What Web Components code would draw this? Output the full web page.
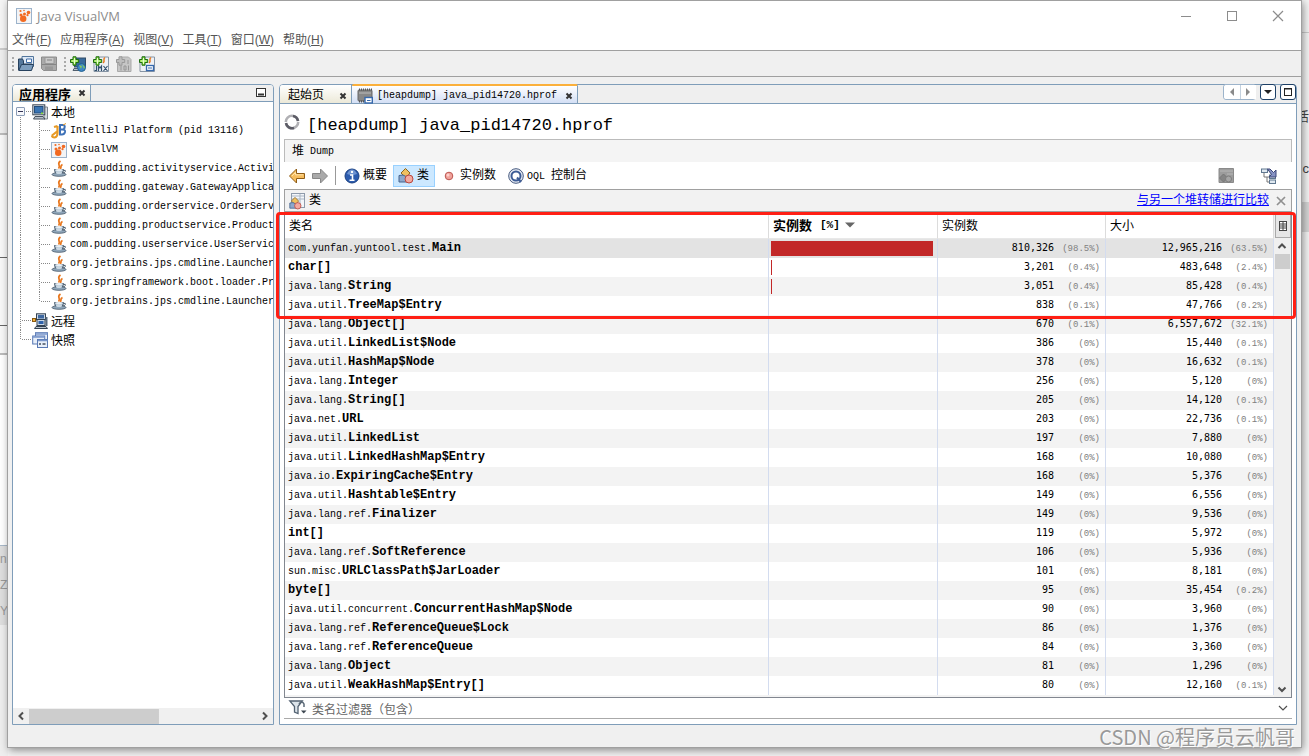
<!DOCTYPE html>
<html lang="zh-CN">
<head>
<meta charset="utf-8">
<title>Java VisualVM</title>
<style>
html { height: 100%; }
body {
  margin: 0; min-height: 100%; box-sizing: border-box; padding: 0 7px 8px 8px;
  display: flex; position: relative; overflow: hidden; color: #000; background: #f2f2f2;
  font: 12px/19px "Liberation Sans", "Noto Sans CJK SC", sans-serif;
  --mono: "Liberation Mono", "Noto Sans CJK SC", monospace;
  --digits: "DejaVu Sans Mono", monospace;
  --ui: "Open Sans", "Noto Sans CJK SC", sans-serif;
  --edge: #7f9db9;
}
app-window { flex: 1; min-width: 0; }
</style>
</head>
<body>
<desk-backdrop></desk-backdrop>
<app-window></app-window>
<script>
const CUP = '<path d="M9.5 0C5 3 10.500 4.500 7.500 7.500M11.500 3.500C8.500 5 11 6 9.300 8" fill="none" stroke="#e8761c" stroke-width="1.700"/><path d="M3.500 8.500h9l-.8 3.500q-.7 1.500-2.200 1.500h-3q-1.700 0-2.200-1.500z" fill="#a9bdcd" stroke="#46586a"/><path d="M12.500 9.500q2.500-.8 1.800 1t-2.800 1.500" fill="none" stroke="#46586a"/><ellipse cx="8" cy="13.500" rx="7" ry="1.800" fill="#8fa6ba" stroke="#46586a" stroke-width=".8"/><ellipse cx="8" cy="11.500" rx="3" ry="1.500" fill="#c9d7e2"/><ellipse cx="8" cy="9" rx="3.800" ry="1" fill="#e6eef4"/>';
const PLUS = '<path d="M3 .8h3v2.700h2.700v3H6v2.700H3V6.500H.5v-3H3z" fill="#8bdd3c" stroke="#1d6b12"/><path d="M4.500 2v6M1.700 5h5.600" stroke="#e9ffd2"/>';
const BOXES = '<path d="M3 5l4.500-4.500L12 5l-4 5z" fill="#f0c060" stroke="#8a6420"/><path d="M1 7.500L5 7l4 2v5H1z" fill="#8da8cc" stroke="#46648e"/><circle cx="11" cy="11" r="4" fill="#f3a9a0" stroke="#b9483f"/>';
const VVM = '<rect x=".5" y=".5" width="15" height="15" fill="#f3f4f6" stroke="#9cb3cb"/><g fill="#f26a21"><ellipse cx="7.200" cy="10.700" rx="3.200" ry="3.200"/><circle cx="5" cy="7" r="1.500"/><circle cx="8.500" cy="6" r="1.500"/><circle cx="12.500" cy="4.500" r="1.800"/><circle cx="4.500" cy="3" r="1.100"/><circle cx="11.500" cy="7.200" r="1.100"/><circle cx="8" cy="2.500" r=".8"/></g>';
const ICONS = {
  visualvm: VVM, java: CUP,
  open: '<path d="M4 .5h11.500v10H4z" fill="#dfe9f5" stroke="#53769c"/><path d="M8.500 3h5v3.500h-5z" fill="#fff" stroke="#3f6da8"/><path d="M.5 3h4l1 2v3h8.500l-1 6H.5z" fill="#54779b" stroke="#28425e"/><path d="M.8 14.500L3.500 8.500h12L13.500 14.500z" fill="#7d9dbd" stroke="#28425e"/>',
  save: '<path d="M.5 1h15v13.500H2.500l-2-2z" fill="#aaa" stroke="#8c8c8c"/><path d="M4 1.500h9v6H4z" fill="#c9c9c9" stroke="#999"/><path d="M4 10.500h8v4H4z" fill="#999"/><path d="M1 8.500h14M6 4h5" stroke="#858585"/>',
  addhost: '<rect x="4.500" y="2" width="11" height="9" fill="#396b9d" stroke="#334c66"/><path d="M4 12.500h5v2H3z" fill="#b4c1cf" stroke="#52606e"/><circle cx="11.500" cy="11.500" r="4" fill="#3c87c8" stroke="#24618f"/><path d="M9 9l3 1-1 3zM12 8l3 3-1 2z" fill="#87c95e"/>' + PLUS,
  addjmx: '<path d="M4.500 1h11v14.500H1v-9z" fill="#eef1f5" stroke="#8795a5"/><path d="M12 1.500c-3 2 1 3-2 5.500" fill="none" stroke="#e8761c" stroke-width="1.500"/><path d="M3.500 10v4.500H1.500M5.500 15v-5l1.500 2 1.500-2v5M10.500 10l4 5M14.500 10l-4 5" fill="none" stroke="#31506f" stroke-width="1.200"/>' + PLUS,
  addcore: '<path d="M4.500 1h8l2.500 2.500v12H1.500v-9z" fill="#c6c6c6" stroke="#aaa"/><path d="M5 9.500v5M8 10h2v4H8zM12.500 9.500v5M12 4v4" fill="none" stroke="#969696"/><path d="M3 .8h3v2.700h2.700v3H6v2.700H3V6.500H.5v-3H3z" fill="#bdbdbd" stroke="#999"/>',
  addsnap: '<path d="M4.500 1h11v14.500H1v-9z" fill="#eef1f5" stroke="#8795a5"/><path d="M12 1.500c-3 2 1 3-2 5.500" fill="none" stroke="#e8761c" stroke-width="1.500"/><rect x="7.500" y="9.500" width="7" height="5" fill="#fff" stroke="#3769ad" stroke-width="1.300"/><path d="M9 12h4" stroke="#3769ad"/>' + PLUS,
  host: '<path d="M12 3h3.500v12H12z" fill="#d6dbe0" stroke="#7d858d"/><rect x=".8" y=".8" width="12" height="10" fill="#d8e0e8" stroke="#3a4653"/><rect x="2.500" y="2.500" width="8.500" height="6.500" fill="#3975b4" stroke="#244d7a"/><path d="M3 12.500h8l2 2.500H1.500z" fill="#b8c2cb" stroke="#46515c"/><path d="M9 8.500h2V10H9z" fill="#8be03c"/>',
  remote: '<path d="M0 7h4" stroke="#444"/><rect x=".5" y="5.500" width="3" height="3" fill="#f5b13c" stroke="#8a5a10"/><rect x="4.500" y=".8" width="9" height="6" fill="#cdd9e6" stroke="#334252"/><rect x="6" y="2" width="6" height="3.500" fill="#3e68a0"/><rect x="5" y="6.500" width="8" height="6" fill="#cdd9e6" stroke="#334252"/><rect x="6.500" y="8" width="5" height="3" fill="#2f62aa"/><path d="M4 13.500h10l1.500 2h-13z" fill="#b8c2cb" stroke="#334252"/><path d="M14.500 4v9" stroke="#596a7c" stroke-width="2"/>',
  snaps: '<g fill="#e8eff9" stroke="#5878b3"><rect x="3.500" y=".7" width="12" height="8"/><rect x=".7" y="4" width="12" height="8"/><rect x="5.500" y="7.500" width="10" height="8"/></g><path d="M3.500 2h12M1 5h11.500M6 8.500h9.500" stroke="#7896cc" stroke-width="1.500"/><path d="M7 11h2v2H7zM10.500 11h3v2h-3z" fill="#6d7785"/>',
  intellij: '<path d="M6.500 3v7q0 4-3 4.500-2.500 0-2.500-2M1 12.500l5-4M3 4l3.500-1" fill="none" stroke="#e79a25" stroke-width="2.200"/><path d="M9 2h2.500q3 0 2 3-.7 1.700-2 1.500 3 0 2.500 2.500-.7 2.500-3 2.500H9zM9 6.500h3" fill="none" stroke="#3f72b8" stroke-width="2"/><path d="M12 2l3-1.500" stroke="#e79a25"/>',
  heap: '<rect x="1" y="2" width="14" height="11" rx="1" fill="#888" stroke="#666"/><path d="M2 1.500h13M2 13.500h6" stroke="#555" stroke-width="2" stroke-dasharray="1 1"/><path d="M2 5h12" stroke="#bbb"/><rect x="8" y="9.500" width="7.300" height="5.500" fill="#fff" stroke="#3769ad" stroke-width="1.400"/><path d="M10 12.500h3.500" stroke="#3769ad"/>',
  spinner: '<circle cx="8" cy="8" r="6.200" fill="none" stroke="#b0b0b4" stroke-width="2.600" stroke-dasharray="17 2 18 2"/><path d="M2 9a6.200 6.200 0 0 0 8 5M14 7a6.200 6.200 0 0 0-5-5" fill="none" stroke="#5c5c66" stroke-width="2.600"/>',
  back: '<path d="M.5 8L7.500 1V5.500h8v5h-8V15z" fill="#f6bd5e" stroke="#8e5c16"/><path d="M3 8l3.500-3.500v2.300h7.500" fill="none" stroke="#ffe3a8"/>',
  forward: '<path d="M15.500 8L8.500 1V5.500h-8v5h8V15z" fill="#aaa" stroke="#888"/>',
  info: '<circle cx="8" cy="8" r="7" fill="#2c5cae" stroke="#1a3f80"/><path d="M3 6q2-4.500 5-4.500T13 6q-5 2-10 0" fill="#6f94d0"/><path d="M6 7h2.500v5M5.500 12.300h5" fill="none" stroke="#fff" stroke-width="1.600"/><circle cx="8" cy="3.900" r="1.200" fill="#fff"/>',
  classes: BOXES,
  instance: '<circle cx="8" cy="8" r="3.800" fill="#f0a29b" stroke="#bb544e"/><circle cx="7" cy="7" r="1.500" fill="#ffd0cc"/>',
  oql: '<circle cx="8" cy="8" r="7.300" fill="#e8ecf4" stroke="#45597f"/><circle cx="8" cy="8" r="4.500" fill="#fff" stroke="#3c5b95" stroke-width="2"/><path d="M9 9.500l4 4.500" stroke="#3c5b95" stroke-width="2"/>',
  classview: '<rect x="2.500" y=".5" width="13" height="14" fill="#f3f6fa" stroke="#8e9bab"/><path d="M3 3h12M3 6h12M11 1v13" stroke="#aab6c4"/><g transform="translate(0 4) scale(.8)">' + BOXES + '</g>',
  graycls: '<path d="M1 .5h14.500v14H1z" fill="#9c9c9c" stroke="#8a8a8a"/><path d="M2 3h13M9 6h6" stroke="#b7b7b7"/><path d="M1.500 10l4-4 4 4-4 4z" fill="#858585" stroke="#777"/><circle cx="10.500" cy="11" r="3" fill="#a6a6a6" stroke="#7d7d7d"/>',
  tree: '<path d="M3 4v5h5M6 9v5h3" fill="none" stroke="#777"/><rect x=".5" y="1" width="6" height="3.500" fill="#dfe8f0" stroke="#607890"/><rect x="8.500" y="7" width="6" height="3.500" fill="#dfe8f0" stroke="#607890"/><rect x="8.500" y="12" width="6" height="3.500" fill="#dfe8f0" stroke="#607890"/><path d="M6.500 1H9l3.500 3.500L15 2v7H8l2.500-2.500z" fill="#8793c4" stroke="#3c4678"/>',
  filter: '<path d="M.8 1h12.500L9 6.500v7l-3.500-1.500v-5.500z" fill="#dce4ea" stroke="#536272" stroke-width="1.300"/><path d="M10 4q3-4 5 0v3" fill="none" stroke="#5c6a78" stroke-width="1.500"/><path d="M12 10.500h5.500l-2.800 3z" fill="#3c4650"/>',
  closetab: '<path d="M5.500 5.500l5 5M10.500 5.500l-5 5" stroke="#333" stroke-width="2"/>',
  closelt: '<path d="M4 4l8 8M12 4l-8 8" stroke="#909090" stroke-width="1.700"/>',
  min: '<path d="M3 8.500h10" stroke="#8c8c8c"/>',
  max: '<rect x="3.500" y="3.500" width="9" height="9" fill="none" stroke="#8c8c8c"/>',
  close: '<path d="M3 3l10 10M13 3L3 13" stroke="#8c8c8c" stroke-width="1.200"/>',
  collapse: '<rect x="3.500" y="3.500" width="9" height="8" fill="#fff" stroke="#333"/><path d="M5 9.500h6" stroke="#333" stroke-width="2"/>',
  left: '<path d="M10 4v8L6 8z" fill="#8a8a8a"/>', right: '<path d="M6 4v8l4-4z" fill="#8a8a8a"/>',
  drop: '<path d="M4 6h8l-4 4z" fill="#222"/>', square: '<rect x="4.500" y="4.500" width="7" height="7" fill="#fff" stroke="#222"/><path d="M4 5h8" stroke="#222"/>',
  sort: '<path d="M3 5.500h10l-5 5z" fill="#666"/>',
  cols: '<rect x="4.500" y="3.500" width="7" height="9" fill="#fff" stroke="#444"/><path d="M8 4v8M5 6h6M5 8h6M5 10h6" stroke="#444"/>',
  up: '<path d="M4.500 10L8 6.500 11.500 10" fill="none" stroke="#505050" stroke-width="2"/>',
  down: '<path d="M4.500 6.500L8 10l3.500-3.500" fill="none" stroke="#505050" stroke-width="2"/>',
  chevl: '<path d="M10 4.500L6.500 8l3.500 3.500" fill="none" stroke="#505050" stroke-width="2"/>',
  chevr: '<path d="M6 4.500L9.500 8 6 11.500" fill="none" stroke="#505050" stroke-width="2"/>',
  thin: '<path d="M4 6l4 4 4-4" fill="none" stroke="#505050" stroke-width="1.200"/>'
};

function define(name, build) {
  customElements.define(name, class extends HTMLElement {
    connectedCallback() {
      if (this.shadowRoot) return;
      const t = document.createElement('template');
      t.innerHTML = build(this);
      this.attachShadow({ mode: 'open' }).append(t.content.cloneNode(true));
    }
  });
}
const BUTTON = 'button{font:inherit;color:inherit;background:none;border:0;padding:0;margin:0;display:flex;align-items:center}';

define('vm-icon', el => `<style>:host{display:block;width:16px;height:16px;flex:none;white-space:normal}svg{display:block;overflow:visible}</style><svg width="16" height="16" viewBox="0 0 16 16" aria-hidden="true">${ICONS[el.getAttribute('name')]}</svg>`);

define('desk-backdrop', () => `<style>
:host{position:absolute;inset:0;z-index:-1;overflow:hidden;color:#999;
 background:linear-gradient(#9a9a9a 0 1px,transparent 1px)}
.left,.right{position:absolute;top:0;bottom:0;width:8px;overflow:hidden;display:flex;flex-direction:column;box-sizing:border-box;line-height:26px}
.left{left:0;padding-top:546px;font-size:12px;background:linear-gradient(#f4f4f4 0 48px,#ccc 48px 50px,#eee 50px 133px,#bbb 133px 135px,#f8f8f8 135px 257px,#666 257px 258px,#f8f8f8 258px 325px,#666 325px 326px,#f8f8f8 326px 353px,#bbb 353px 355px,#fff 355px 545px,#a8b8c8 545px 546px,#dedede 546px 625px,#eee 625px)}
.right{right:0;padding-top:104px;font-size:13px;color:#444;direction:rtl;background:linear-gradient(#f4f4f4 0 32px,#ccc 32px 33px,#f4f4f4 33px 202px,#d6d6d6 202px 232px,#f4f4f4 232px)}
</style><div class="left"><span>n</span><span>Z</span><span>Y</span></div>
<div class="right"><span>活</span><span>&nbsp;</span><span>c</span></div>`);

define('title-bar', () => `<style>${BUTTON}
:host{display:flex;align-items:center;height:30px;padding:0 14px 0 8px;color:#8c8c8c;font:13px/30px var(--ui)}
h1{font:inherit;margin:0 auto 0 5px}.win{display:flex;gap:29px}.win button{width:17px}
</style><vm-icon name="visualvm"></vm-icon><h1>Java VisualVM</h1>
<div class="win"><button aria-label="最小化"><vm-icon name="min"></vm-icon></button><button aria-label="最大化"><vm-icon name="max"></vm-icon></button><button aria-label="关闭"><vm-icon name="close"></vm-icon></button></div>`);

define('menu-bar', () => `<style>${BUTTON}
:host{display:flex;gap:9px;height:19px;padding-left:4px;border-bottom:1px solid #a0a0a0;color:#555}
</style>${[['文件','F'],['应用程序','A'],['视图','V'],['工具','T'],['窗口','W'],['帮助','H']].map(([a, b]) => `<button><span>${a}(<u>${b}</u>)</span></button>`).join('')}`);

define('tool-bar', () => `<style>${BUTTON}
:host{display:flex;align-items:center;gap:7px;height:25px;padding-left:4px;background:#f0f0f0;border-bottom:1px solid #a0a0a0}
i{width:2px;height:14px;background:repeating-linear-gradient(#aaa 0 2px,transparent 2px 4px)}i+button{margin-left:-3px}
</style><i></i><button aria-label="打开"><vm-icon name="open"></vm-icon></button><button aria-label="保存" disabled><vm-icon name="save"></vm-icon></button>
<i></i><button aria-label="添加主机"><vm-icon name="addhost"></vm-icon></button><button aria-label="添加JMX"><vm-icon name="addjmx"></vm-icon></button><button aria-label="添加核心转储" disabled><vm-icon name="addcore"></vm-icon></button><button aria-label="添加快照"><vm-icon name="addsnap"></vm-icon></button>`);

define('tree-row', el => {
  const child = el.hasAttribute('child');
  return `<style>
:host{display:flex;align-items:center;height:19px;white-space:pre}
.g{flex:none;width:19px;height:19px;display:flex;align-items:center;
 background:repeating-linear-gradient(#888 0 1px,#fff 1px 2px) 7px 0/1px 100% no-repeat}
.h{background:repeating-linear-gradient(#888 0 1px,#fff 1px 2px) 7px 0/1px 100% no-repeat,repeating-linear-gradient(90deg,#888 0 1px,#fff 1px 2px) 7px 9px/11px 1px no-repeat}
.last{background-size:1px 10px,11px 1px}
.first{background-position:7px 9px,7px 9px}
b{width:7px;height:7px;margin-left:3px;border:1px solid #8a9bb5;background:linear-gradient(#335 0 0) 1px 3px/5px 1px no-repeat,#f7f8fb;border-radius:1px}
span{margin-left:3px;font:${child ? '10px/19px var(--mono)' : '12px/19px "Noto Sans CJK SC",sans-serif'}}
</style>${child ? '<div class="g"></div>' : ''}<div class="g h ${el.getAttribute('pos') || ''}">${el.hasAttribute('open') ? '<b></b>' : ''}</div><vm-icon name="${el.getAttribute('icon')}"></vm-icon><span><slot></slot></span>`;
});

define('app-tree', () => `<style>${BUTTON}
:host{display:flex;flex-direction:column;border:1px solid var(--edge);border-radius:4px 4px 0 0;background:#fff;min-width:0}
header{display:flex;height:16px;background:#efefef;border-bottom:1px solid var(--edge);border-radius:3px 3px 0 0}
.tab{display:flex;align-items:center;padding:0 0 0 6px;background:linear-gradient(#fff,#ece9d8);border-right:1px solid var(--edge);font:bold 13px/19px "Noto Sans CJK SC",sans-serif;overflow:hidden;border-radius:3px 0 0 0}
.tab vm-icon{margin-left:3px}.tab button,header>button{height:16px}
header>button{margin:0 4px 0 auto}
.rows{flex:1;overflow:hidden}
.scroll{display:flex;align-items:center;height:16px;background:#f0f0f0}
.thumb{flex:1;height:15px;background:linear-gradient(#cdcdcd 0 0) 0 0/57% 100% no-repeat}
</style><header><div class="tab"><span>应用程序</span><button aria-label="关闭"><vm-icon name="closetab"></vm-icon></button></div><button aria-label="最小化"><vm-icon name="collapse"></vm-icon></button></header>
<div class="rows"><tree-row icon="host" open pos="first">本地</tree-row>
${[['intellij','IntelliJ Platform (pid 13116)'],['visualvm','VisualVM'],['java','com.pudding.activityservice.Activi'],['java','com.pudding.gateway.GatewayApplica'],['java','com.pudding.orderservice.OrderServ'],['java','com.pudding.productservice.Product'],['java','com.pudding.userservice.UserServic'],['java','org.jetbrains.jps.cmdline.Launcher'],['java','org.springframework.boot.loader.Pr'],['java','org.jetbrains.jps.cmdline.Launcher']].map(([i, t], n) => `<tree-row child icon="${i}"${n === 9 ? ' pos="last"' : ''}>${t}</tree-row>`).join('')}
<tree-row icon="remote">远程</tree-row><tree-row icon="snaps" pos="last">快照</tree-row></div>
<div class="scroll"><vm-icon name="chevl"></vm-icon><div class="thumb"></div><vm-icon name="chevr"></vm-icon></div>`);

const ROWS = `com.yunfan.yuntool.test.|Main|810,326|98.5%|12,965,216|63.5%
|char[]|3,201|0.4%|483,648|2.4%
java.lang.|String|3,051|0.4%|85,428|0.4%
java.util.|TreeMap$Entry|838|0.1%|47,766|0.2%
java.lang.|Object[]|670|0.1%|6,557,672|32.1%
java.util.|LinkedList$Node|386|0%|15,440|0.1%
java.util.|HashMap$Node|378|0%|16,632|0.1%
java.lang.|Integer|256|0%|5,120|0%
java.lang.|String[]|205|0%|14,120|0.1%
java.net.|URL|203|0%|22,736|0.1%
java.util.|LinkedList|197|0%|7,880|0%
java.util.|LinkedHashMap$Entry|168|0%|10,080|0%
java.io.|ExpiringCache$Entry|168|0%|5,376|0%
java.util.|Hashtable$Entry|149|0%|6,556|0%
java.lang.ref.|Finalizer|149|0%|9,536|0%
|int[]|119|0%|5,972|0%
java.lang.ref.|SoftReference|106|0%|5,936|0%
sun.misc.|URLClassPath$JarLoader|101|0%|8,181|0%
|byte[]|95|0%|35,454|0.2%
java.util.concurrent.|ConcurrentHashMap$Node|90|0%|3,960|0%
java.lang.ref.|ReferenceQueue$Lock|86|0%|1,376|0%
java.lang.ref.|ReferenceQueue|84|0%|3,360|0%
java.lang.|Object|81|0%|1,296|0%
java.util.|WeakHashMap$Entry[]|80|0%|12,160|0.1%`.split('\n').map(r => r.split('|'));

define('class-table', () => `<style>${BUTTON}
:host{display:flex;position:relative;flex:1;border:solid #828790;border-width:0 1px 1px;background:#fff}
.grid{flex:1;min-width:0;background:#f3f3f3}
table{width:100%;border-collapse:separate;border-spacing:0;table-layout:fixed}
th{height:26px;padding:0 0 0 4px;text-align:left;font:12px/26px "Noto Sans CJK SC",sans-serif;background:#fff;border-right:1px solid #dcdcdc;border-bottom:1px solid #e8e8e8;box-sizing:content-box}
th.sorted{font-weight:bold;font-size:13px}
th button{height:26px;white-space:pre}
small{font:bold 11px/26px var(--mono);margin:0 2px 0 8px}
td{height:19px;padding:0;border-right:1px solid #d3dcef;font:10px/15px var(--mono);white-space:nowrap;overflow:hidden;vertical-align:middle}
tr{background:#fff}tbody tr:nth-child(odd){background:#f3f3f3}tbody tr:first-child{background:#e3e3e3}
td:first-child{padding-left:3px}td b{font-size:12px;line-height:15px}
td.n{font-family:var(--digits);text-align:right;padding-right:5px}
td.n span{display:inline-block;width:46px;font:9px/15px var(--mono);color:#808080}
.bar{height:15px;margin-left:2px;background:#c22828}
aside{display:flex;flex-direction:column;width:17px;background:#f0f0f0}
.corner{height:25px;margin:1px 0 0 1px;background:#e6e6e6;border:1px solid #aaa;box-sizing:border-box}
.corner vm-icon{margin-left:-1px}
.thumb{height:15px;margin:0 1px;background:#cdcdcd}
.thumb+vm-icon{margin-top:auto}
.mark{position:absolute;z-index:2;inset:0 -5px auto -9px;height:101px;border:3px solid #ff1f14;border-radius:4px;pointer-events:none}
</style><div class="grid"><table><colgroup><col><col width="169"><col width="168"><col width="168"></colgroup>
<thead><tr><th>类名</th><th class="sorted"><button><span>实例数</span><small>[%]</small><vm-icon name="sort"></vm-icon></button></th><th>实例数</th><th>大小</th></tr></thead>
<tbody>${ROWS.map(([p, n, c, cp, s, sp], i) => `<tr><td>${p}<b>${n}</b></td><td>${i < 3 ? `<div class="bar" style="width:${i ? '1px' : '162px'}"></div>` : ''}</td><td class="n">${c}<span>(${cp})</span></td><td class="n">${s}<span>(${sp})</span></td></tr>`).join('')}</tbody></table></div>
<aside><button class="corner" aria-label="列"><vm-icon name="cols"></vm-icon></button><vm-icon name="up"></vm-icon><div class="thumb"></div><vm-icon name="down"></vm-icon></aside><div class="mark"></div>`);

define('heap-view', () => `<style>${BUTTON}
:host{display:flex;flex-direction:column;border:1px solid var(--edge);border-radius:4px 4px 0 0;background:#fff;min-width:0}
nav{display:flex;height:18px;background:#efefef;border-bottom:1px solid var(--edge);border-radius:4px 4px 0 0}
.tab{display:flex;align-items:center;border-right:1px solid var(--edge);background:linear-gradient(#fff,#ece9d8);padding:3px 0 0 8px;gap:11px;border-radius:3px 0 0 0}
.on{padding-left:5px;gap:4px;background:linear-gradient(#fff,#d3dff5);border-top:2px solid #fbb03b;border-radius:2px 2px 0 0;margin-top:-1px;padding-top:2px}
.mono{font:10px/19px var(--mono);white-space:pre}
.ctl{display:flex;margin:-1px 0 0 auto;gap:4px}
.ctl button,.ctl div{height:16px;box-sizing:border-box;border:1px solid #1c3f66;border-radius:3px;background:#fff;justify-content:center;width:16px}
.ctl div{display:flex;width:33px;border-color:#9db4cb}.ctl div button{border:0;height:14px}.ctl div button+button{border-left:1px solid #c4d1de;border-radius:0}
.body{display:flex;flex-direction:column;flex:1;padding:1px 4px 5px}
h2{display:flex;align-items:center;gap:7px;margin:0;height:34px;font:17px/34px var(--mono);white-space:pre}
h2 span{padding-top:8px}
.dump{height:22px;border:solid #bbb;border-width:1px 1px 0;background:#f4f4f4;padding-left:7px;display:flex;align-items:center;gap:6px}
.tools{display:flex;align-items:center;height:27px;padding:0 15px 0 5px}
.tools button{gap:3px;height:22px;padding:0 6px 0 6px;box-sizing:border-box}
.tools .nav{padding:0 7px 0 0}.tools hr{width:1px;height:19px;margin:0 2px 0 0;border:0;background:#999}
.tools .sel{background:#cce8ff;border:1px solid #99d1ff;padding:0 5px 0 4px}
.sp{flex:1}.tools .end{padding:0 0 0 27px}
.bar{display:flex;align-items:center;height:21px;border:1px solid #a0a0a0;background:#f2f2f2;padding:0 2px 0 4px;gap:4px}
.bar a{margin-left:auto;color:#00f;text-decoration:underline}
.filter{display:flex;align-items:center;height:20px;border-bottom:1px solid #aaa;padding:0 1px 0 5px;gap:7px}
input{flex:1;border:0;outline:0;padding:0;background:none;font:12px/19px "Noto Sans CJK SC",sans-serif}
input::placeholder{color:#666}
</style>
<nav><div class="tab"><span>起始页</span><button aria-label="关闭"><vm-icon name="closetab"></vm-icon></button></div>
<div class="tab on"><vm-icon name="heap"></vm-icon><span class="mono">[heapdump] java_pid14720.hprof</span><button aria-label="关闭"><vm-icon name="closetab"></vm-icon></button></div>
<div class="ctl"><div><button aria-label="向左"><vm-icon name="left"></vm-icon></button><button aria-label="向右"><vm-icon name="right"></vm-icon></button></div><button aria-label="列表"><vm-icon name="drop"></vm-icon></button><button aria-label="最大化"><vm-icon name="square"></vm-icon></button></div></nav>
<div class="body"><h2><vm-icon name="spinner"></vm-icon><span>[heapdump] java_pid14720.hprof</span></h2>
<div class="dump"><span>堆</span><span class="mono">Dump</span></div>
<div class="tools"><button class="nav" aria-label="后退"><vm-icon name="back"></vm-icon></button><button class="nav" aria-label="前进"><vm-icon name="forward"></vm-icon></button><hr><button><vm-icon name="info"></vm-icon>概要</button><button class="sel"><vm-icon name="classes"></vm-icon>类</button><button><vm-icon name="instance"></vm-icon>实例数</button><button><vm-icon name="oql"></vm-icon><span><span class="mono">OQL </span>控制台</span></button><span class="sp"></span><button class="end" aria-label="比较" disabled><vm-icon name="graycls"></vm-icon></button><button class="end" aria-label="树"><vm-icon name="tree"></vm-icon></button></div>
<div class="bar"><vm-icon name="classview"></vm-icon><span>类</span><a href="#">与另一个堆转储进行比较</a><button aria-label="关闭"><vm-icon name="closelt"></vm-icon></button></div>
<class-table></class-table>
<div class="filter"><vm-icon name="filter"></vm-icon><input aria-label="类名过滤器" placeholder="类名过滤器（包含）"><vm-icon name="thin"></vm-icon></div></div>`);

define('status-bar', () => `<style>:host{display:flex;justify-content:flex-end;height:22px;padding-right:6px;color:#999;font:20px/24px "Noto Sans CJK SC",sans-serif;text-shadow:1px 1px #fff}</style><span>CSDN @程序员云帆哥</span>`);

define('app-window', () => `<style>
:host{display:flex;flex-direction:column;background:#fff;border:1px solid #a0a0a0;border-left-width:0;box-shadow:-1px 0 #a0a0a0,1px 2px 8px rgba(0,0,0,.45);box-sizing:border-box}
main{flex:1;display:grid;grid-template-columns:262px 1fr;gap:5px;background:#f0f0f0;padding:7px 4px 0}
status-bar{background:#f0f0f0}
</style><title-bar></title-bar><menu-bar></menu-bar><tool-bar></tool-bar><main><app-tree></app-tree><heap-view></heap-view></main><status-bar></status-bar>`);
</script>
</body>
</html>
